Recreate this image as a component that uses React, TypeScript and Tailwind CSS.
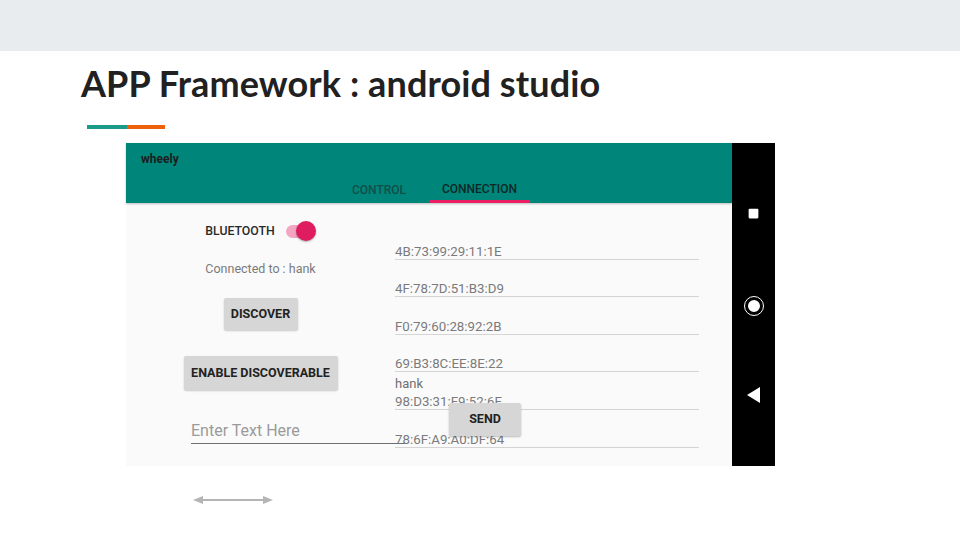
import { Square, Circle } from 'lucide-react';

const devices = [
  { name: '', mac: '4B:73:99:29:11:1E' },
  { name: '', mac: '4F:78:7D:51:B3:D9' },
  { name: '', mac: 'F0:79:60:28:92:2B' },
  { name: '', mac: '69:B3:8C:EE:8E:22' },
  { name: 'hank', mac: '98:D3:31:F9:52:6F' },
  { name: '', mac: '78:6F:A9:A0:DF:64' },
];

const ROBOTO = { fontFamily: 'Roboto, "Liberation Sans", sans-serif' };

function DeviceRow({ name, mac }: { name: string; mac: string }) {
  return (
    <div className="flex h-[37.6px] flex-col justify-end border-b border-[#d4d4d4]">
      {name && <span className="text-[13px] leading-[21px] text-[#6f6f6f]">{name}</span>}
      <span className="text-[13.3px] leading-[15px] text-[#7a7a7a]">{mac}</span>
    </div>
  );
}

function PhoneScreen() {
  return (
    <div className="flex h-[323px] w-[649px]" style={ROBOTO}>
      <div className="flex flex-1 flex-col bg-[#fafafa]">
        {/* app bar + tabs */}
        <div className="flex h-[60px] flex-col bg-[#00857a] shadow-[0_1px_2px_rgba(0,0,0,0.25)]">
          <div className="pl-[15px] pt-[9px] text-[12px] font-bold leading-[14px] text-[#1d1d1d]">wheely</div>
          <div className="mt-auto flex pl-[203px]">
            <div className="flex h-[32px] w-[100px] items-center justify-center pt-[5px] text-[12px] font-medium text-[#114f49]">
              CONTROL
            </div>
            <div className="flex h-[32px] w-[101px] flex-col items-center justify-center border-b-[3px] border-[#e91e63] pt-[7px] text-[12px] font-medium text-[#0e2825]">
              CONNECTION
            </div>
          </div>
        </div>

        {/* body */}
        <div className="relative flex flex-1">
          <div className="flex w-[269px] flex-col items-center pt-[19px]">
            <div className="flex items-center gap-[11px]">
              <span className="text-[12.3px] font-medium text-[#2a2a2a]">BLUETOOTH</span>
              <div className="relative mr-[5px] h-[13px] w-[25px] rounded-full bg-[#f3a6c1]">
                <div className="absolute right-[-5px] top-[-3.5px] h-[20px] w-[20px] rounded-full bg-[#de1c5f] shadow-[0_1px_2px_rgba(0,0,0,0.3)]" />
              </div>
            </div>
            <div className="mt-[20px] text-[12.5px] text-[#7a7a7a]">Connected to : hank</div>
            <div className="mt-[19px] flex h-[32px] w-[74px] items-center justify-center rounded-[2px] bg-[#d6d6d6] text-[12.5px] font-bold text-[#222] shadow-[0_1px_2px_rgba(0,0,0,0.2)]">
              DISCOVER
            </div>
            <div className="mt-[26px] flex h-[34px] w-[154px] items-center justify-center rounded-[2px] bg-[#d6d6d6] text-[12.5px] font-bold text-[#222] shadow-[0_1px_2px_rgba(0,0,0,0.2)]">
              ENABLE DISCOVERABLE
            </div>
            <div className="ml-[65px] mt-[31px] w-[216px] self-start border-b border-[#6f6f6f] pb-[2px] text-[16px] leading-[20px] text-[#9a9a9a]">
              Enter Text Here
            </div>
          </div>

          <div className="flex w-[304px] flex-col pt-[19px]">
            {devices.map((d) => (
              <DeviceRow key={d.mac} {...d} />
            ))}
          </div>

          <div className="absolute left-[323px] top-[200px] flex h-[33px] w-[72px] items-center justify-center rounded-[2px] bg-[#d6d6d6] text-[12.5px] font-bold text-[#222] shadow-[0_1px_2px_rgba(0,0,0,0.25)]">
            SEND
          </div>
        </div>
      </div>

      {/* nav bar */}
      <div className="flex w-[43px] flex-col items-center bg-black pt-[64px] text-white">
        <Square size={13} fill="white" strokeWidth={0} />
        <div className="mt-[76px] flex h-[20px] w-[20px] items-center justify-center rounded-full border-[1.5px] border-white">
          <Circle size={16} fill="white" stroke="black" strokeWidth={2} />
        </div>
        <svg className="mt-[70px]" width="16" height="18" viewBox="0 0 16 18">
          <polygon points="14,1 14,17 1,9" fill="white" />
        </svg>
      </div>
    </div>
  );
}

export default function App() {
  return (
    <div className="flex h-[540px] w-[960px] flex-col overflow-hidden bg-white">
      <div className="h-[51px] bg-[#e8ecee]" />
      <div className="pl-[81px] pt-[11px]">
        <h1
          className="text-[36px] font-bold leading-[42px] tracking-[0.1px] text-[#212121]"
          style={{ fontFamily: 'Lato, "Open Sans", sans-serif' }}
        >
          APP Framework : android studio
        </h1>
      </div>
      <div className="ml-[87px] mt-[21px] flex h-[4px]">
        <div className="w-[40px] bg-[#1a9a88]" />
        <div className="w-[38px] bg-[#ee5f0b]" />
      </div>
      <div className="ml-[126px] mt-[14px]">
        <PhoneScreen />
      </div>
      <div className="ml-[193px] mt-[29px]">
        <svg width="80" height="10" viewBox="0 0 80 10">
          <line x1="6" y1="5" x2="74" y2="5" stroke="#b5b5b5" strokeWidth="2" />
          <polygon points="0,5 10,1 10,9" fill="#b5b5b5" />
          <polygon points="80,5 70,1 70,9" fill="#b5b5b5" />
        </svg>
      </div>
    </div>
  );
}
